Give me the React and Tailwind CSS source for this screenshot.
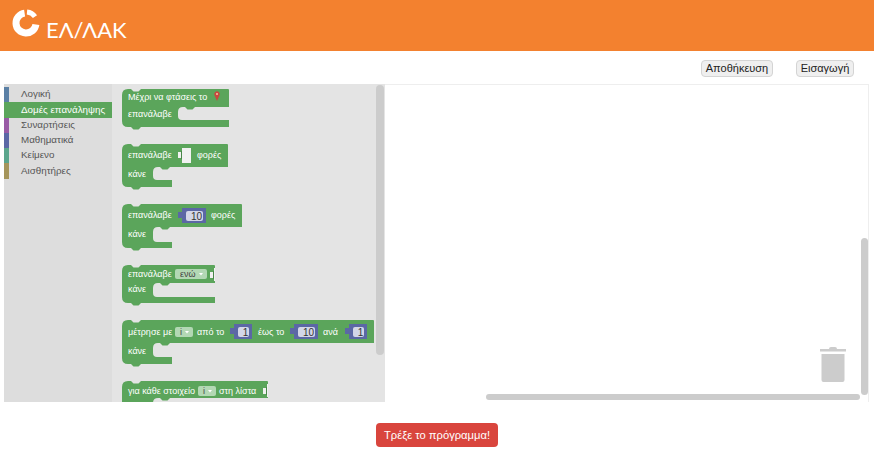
import React from "react";

const categories = [
    { name: "Λογική", stripe: "bg-[#5b80a5]" },
    { name: "Δομές επανάληψης", stripe: "bg-[#5ba55b]", selected: true },
    { name: "Συναρτήσεις", stripe: "bg-[#995ba5]" },
    { name: "Μαθηματικά", stripe: "bg-[#5b67a5]" },
    { name: "Κείμενο", stripe: "bg-[#5ba58c]" },
    { name: "Αισθητήρες", stripe: "bg-[#a5955b]" },
];

// Blockly-like outline of a loop block, in page coordinates
const blockPath = ({ top, right, rowEnd, notchX, notchEnd, bottom, bottomRight }) => {
    const left = 122;
    return [
        `M${left} ${top + 6} Q${left} ${top} ${left + 6} ${top}`,
        `H${left + 9} l2.5 2.5 h5 l2.5 -2.5 H${right - 1} Q${right} ${top} ${right} ${top + 1} V${rowEnd}`,
        `H${notchX + 17} l-2.5 2.5 h-5 l-2.5 -2.5 H${notchX + 5}`,
        `Q${notchX} ${rowEnd} ${notchX} ${rowEnd + 5} V${notchEnd - 4} Q${notchX} ${notchEnd} ${notchX + 4} ${notchEnd}`,
        `H${bottomRight} V${bottom} H${left + 19} l-2.5 2.5 h-5 l-2.5 -2.5 H${left + 6}`,
        `Q${left} ${bottom} ${left} ${bottom - 6} Z`,
    ].join(" ");
};

const Label = ({ x, y, children }) => (
    <text x={x} y={y} fill="#fff" fontSize="9" fontWeight="500" fontFamily="'Liberation Sans', sans-serif">
        {children}
    </text>
);

const Socket = ({ x, y, w, h }) => (
    <g>
        <path d={`M${x + 4} ${y} H${x + w} V${y + h} H${x + 4} V${y + 10} H${x} V${y + 4} H${x + 4} Z`} fill="#f1f1f1" />
        <path d={`M${x + 3.5} ${y + 3} V${y + 11}`} stroke="#4a864a" strokeWidth="1" />
    </g>
);

const NumberBlock = ({ x, y, w, value }) => (
    <g>
        <path d={`M${x + 4} ${y} H${x + w} V${y + 15} H${x + 4} V${y + 10} H${x} V${y + 4} H${x + 4} Z`} fill="#5b67a5" />
        <rect x={x + 8} y={y + 3} width={w - 11} height={10} rx="2" fill="#d3d6e8" />
        <text x={x + 4.5 + w / 2} y={y + 11.5} textAnchor="middle" fill="#333" fontSize="10" fontFamily="'Liberation Sans', sans-serif">
            {value}
        </text>
    </g>
);

const Dropdown = ({ x, y, w, value }) => (
    <g>
        <rect x={x} y={y} width={w} height={10} rx="2" fill="#b3d8b4" />
        <text x={x + 5} y={y + 8} fill="#444" fontSize="9" fontFamily="'Liberation Sans', sans-serif">
            {value}
        </text>
        <path d={`M${x + w - 8} ${y + 4} h4 l-2 2.5 Z`} fill="#fff" />
    </g>
);

const Pin = ({ x, y }) => (
    <g>
        <path d={`M${x} ${y + 8} L${x - 2.4} ${y + 2.5} A2.8 2.8 0 1 1 ${x + 2.4} ${y + 2.5} Z`} fill="#c9473f" />
        <circle cx={x} cy={y + 1} r="1" fill="#f3c7a0" />
    </g>
);

const Block = ({ top, height, shape, children }) => (
    <svg width="262" height={height} viewBox={`122 ${top} 262 ${height}`} className="shrink-0 block">
        <path d={blockPath({ top, ...shape })} fill="#5ba55b" />
        {children}
    </svg>
);

const Flyout = () => (
    <div className="relative w-[273px] shrink-0 h-full overflow-hidden bg-[#e4e4e4] pt-[5px] pl-[10px] flex flex-col gap-[14px]">
        <Block top={89} height={41} shape={{ right: 229, rowEnd: 107, notchX: 178, notchEnd: 120, bottom: 127, bottomRight: 229 }}>
            <Label x={128} y={100}>Μέχρι να φτάσεις το</Label>
            <Pin x={217} y={93} />
            <Label x={128} y={117}>επανάλαβε</Label>
        </Block>
        <Block top={144} height={46} shape={{ right: 228, rowEnd: 167, notchX: 153, notchEnd: 180, bottom: 187, bottomRight: 172 }}>
            <Label x={128} y={158}>επανάλαβε</Label>
            <Socket x={178} y={148} w={13} h={15} />
            <Label x={197} y={158}>φορές</Label>
            <Label x={128} y={177}>κάνε</Label>
        </Block>
        <Block top={204} height={47} shape={{ right: 242, rowEnd: 227, notchX: 153, notchEnd: 242, bottom: 248, bottomRight: 172 }}>
            <Label x={128} y={218}>επανάλαβε</Label>
            <NumberBlock x={178} y={208} w={28} value="10" />
            <Label x={211} y={218}>φορές</Label>
            <Label x={128} y={237}>κάνε</Label>
        </Block>
        <Block top={265} height={41} shape={{ right: 215, rowEnd: 283, notchX: 153, notchEnd: 297, bottom: 303, bottomRight: 215 }}>
            <Label x={128} y={277}>επανάλαβε</Label>
            <Dropdown x={175} y={269} w={32} value="ενώ" />
            <Socket x={210} y={268} w={5} h={13} />
            <Label x={128} y={292}>κάνε</Label>
        </Block>
        <Block top={320} height={47} shape={{ right: 374, rowEnd: 343, notchX: 153, notchEnd: 357, bottom: 364, bottomRight: 172 }}>
            <Label x={128} y={335}>μέτρησε με</Label>
            <Dropdown x={175} y={327} w={18} value="i" />
            <Label x={197} y={335}>από το</Label>
            <NumberBlock x={230} y={324} w={22} value="1" />
            <Label x={258} y={335}>έως το</Label>
            <NumberBlock x={290} y={324} w={28} value="10" />
            <Label x={323} y={335}>ανά</Label>
            <NumberBlock x={345} y={324} w={22} value="1" />
            <Label x={128} y={354}>κάνε</Label>
        </Block>
        <Block top={381} height={30} shape={{ right: 268, rowEnd: 398, notchX: 153, notchEnd: 420, bottom: 424, bottomRight: 172 }}>
            <Label x={128} y={394}>για κάθε στοιχείο</Label>
            <Dropdown x={198} y={386} w={18} value="i" />
            <Label x={219} y={394}>στη λίστα</Label>
            <Socket x={263} y={384} w={5} h={13} />
        </Block>
        <div className="absolute left-[264px] top-px w-[8px] h-[270px] rounded bg-[#cccccc]" />
    </div>
);

const Logo = () => (
    <div className="flex items-start pl-[11px] pt-[8px] text-white">
        <svg width="30" height="30" viewBox="0 0 30 30" className="shrink-0">
            <path d="M24.9 16.4 A10 10 0 1 1 13.6 5.1" fill="none" stroke="#fff" strokeWidth="7" />
            <path d="M16 4 A11 11 0 0 1 24 8.7" fill="none" stroke="#fff" strokeWidth="5" />
        </svg>
        <span className="mt-[9px] ml-[5px] text-[22px] leading-[26px] font-normal font-['Lato',sans-serif]">ΕΛ/ΛΑΚ</span>
    </div>
);

const GreyButton = ({ children, className }) => (
    <button className={`h-[17px] rounded-sm border border-[#d4d4d4] bg-[#efefef] text-[11px] leading-none text-[#222] font-['Liberation_Sans',sans-serif] ${className}`}>
        {children}
    </button>
);

export default function App() {
    return (
        <div className="w-[874px] h-[459px] bg-white overflow-hidden font-['Liberation_Sans',sans-serif]">
            <header className="h-[51px] bg-[#f3812f]">
                <Logo />
            </header>

            {/* Save / import buttons */}
            <div className="h-[33px] flex items-start justify-end pt-[9px] pr-[20px] gap-[23px]">
                <GreyButton className="w-[72px]">Αποθήκευση</GreyButton>
                <GreyButton className="w-[58px]">Εισαγωγή</GreyButton>
            </div>

            {/* Blockly area */}
            <div className="ml-[4px] w-[865px] h-[318px] flex">
                <div className="w-[108px] shrink-0 bg-[#dddddd] pt-[3px] text-[9.8px] text-[#555]">
                    {categories.map((cat) => (
                        <div
                            key={cat.name}
                            className={`h-[15.3px] flex items-center ${cat.selected ? "bg-[#5ba55b] text-white" : ""}`}
                        >
                            <span className={`w-[5px] h-full shrink-0 ${cat.stripe}`} />
                            <span className="ml-[12px] whitespace-nowrap">{cat.name}</span>
                        </div>
                    ))}
                </div>
                <Flyout />
                <div className="relative flex-1 bg-white border-t border-r border-[#eeeeee]">
                    <svg width="28" height="35" viewBox="0 0 28 35" className="absolute left-[434px] top-[262px]">
                        <path d="M10 2 Q10 0 12 0 H16 Q18 0 18 2 H27 V4.5 H1 V2 Z M2.5 7 H25.5 V33 Q25.5 35 23.5 35 H4.5 Q2.5 35 2.5 33 Z" fill="#cccccc" />
                    </svg>
                    <div className="absolute left-[476px] top-[153px] w-[7px] h-[157px] rounded bg-[#cccccc]" />
                    <div className="absolute left-[101px] top-[309px] w-[374px] h-[6px] rounded bg-[#cccccc]" />
                </div>
            </div>

            <div className="flex justify-center pt-[21px]">
                <button className="w-[122px] h-[24px] rounded-sm bg-[#d9453d] text-[11.2px] text-white">
                    Τρέξε το πρόγραμμα!
                </button>
            </div>
        </div>
    );
}
